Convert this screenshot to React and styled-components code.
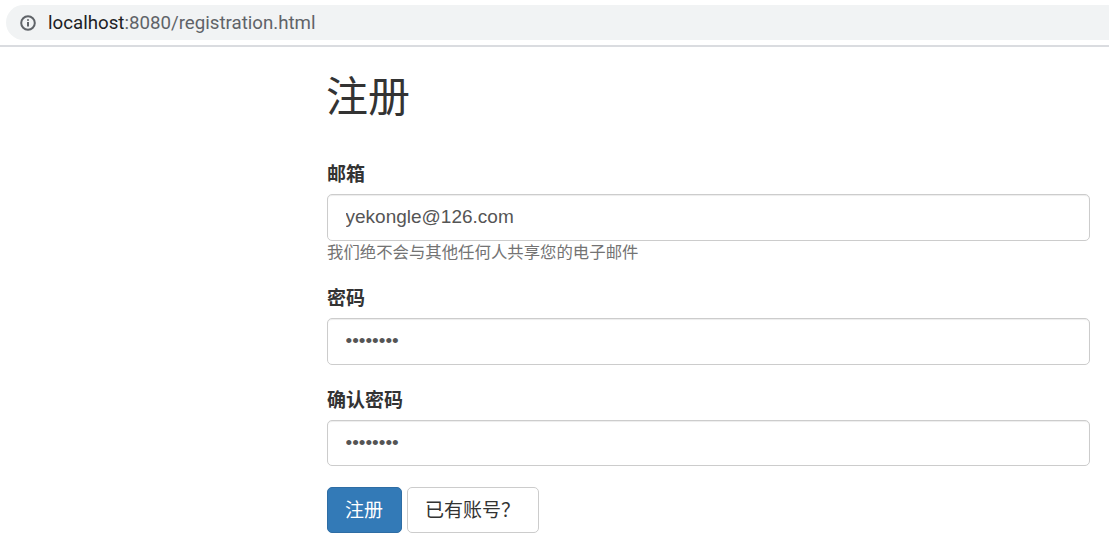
import React from "react";
import styled, { createGlobalStyle } from "styled-components";

const GlobalStyle = createGlobalStyle`
  html, body {
    margin: 0;
    padding: 0;
    background: #fff;
  }
  * {
    box-sizing: border-box;
  }
`;

const fontStack = `"Liberation Sans", "Noto Sans CJK SC", sans-serif`;

const Page = styled.div`
  width: 1109px;
  height: 546px;
  overflow: hidden;
  font-family: ${fontStack};
  color: #333;
`;

const BrowserBar = styled.div`
  height: 47px;
  padding: 5px 0 0 6px;
  border-bottom: 2px solid #dadce0;
`;

const AddressPill = styled.div`
  height: 35px;
  display: flex;
  align-items: center;
  gap: 12px;
  padding-left: 14px;
  background: #f1f3f4;
  border-radius: 18px 0 0 18px;
`;

const Url = styled.div`
  font-family: "Roboto", ${fontStack};
  font-size: 18.7px;
  color: #5f6368;
  white-space: nowrap;
  span {
    color: #202124;
  }
`;

const Main = styled.main`
  width: 763px;
  margin-left: 327px;
`;

const Title = styled.h1`
  margin: 0;
  padding-top: 25px;
  height: 109px;
  font-size: 42px;
  line-height: 52px;
  font-weight: 400;
  text-indent: -1px;
`;

const Field = styled.div`
  margin-bottom: ${(p) => p.$gap}px;
`;

const Label = styled.label`
  display: block;
  height: 38px;
  font-size: 19px;
  line-height: 37px;
  font-weight: 700;
`;

const Input = styled.input`
  display: block;
  width: 100%;
  height: ${(p) => p.$h || 47}px;
  padding: 0 18px 1px 17.5px;
  font-family: ${fontStack};
  font-size: 19px;
  color: #555;
  background: #fff;
  border: 1px solid #ccc;
  border-radius: 5px;
  box-shadow: inset 0 1px 1px rgba(0, 0, 0, 0.075);
  outline: none;
`;

const Help = styled.small`
  display: block;
  height: 23px;
  font-size: 16.4px;
  line-height: 23px;
  color: #737373;
`;

const Actions = styled.div`
  display: flex;
  gap: 5px;
`;

const Button = styled.button`
  height: 46px;
  padding: 0 18px 3px 17px;
  font-family: ${fontStack};
  font-size: 19px;
  color: ${(p) => (p.$primary ? "#fff" : "#333")};
  background: ${(p) => (p.$primary ? "#337ab7" : "#fff")};
  border: 1px solid ${(p) => (p.$primary ? "#2e6da4" : "#ccc")};
  border-radius: 5px;
`;

const InfoIcon = () => (
  <svg width="16" height="16" viewBox="0 0 16 16" fill="none" stroke="#5f6368">
    <circle cx="8" cy="8" r="6.8" strokeWidth="2" />
    <path d="M8 7v4.6M8 4.2v1.6" strokeWidth="2" />
  </svg>
);

const App = () => (
  <Page>
    <GlobalStyle />
    <BrowserBar>
      <AddressPill>
        <InfoIcon />
        <Url>
          <span>localhost</span>:8080/registration.html
        </Url>
      </AddressPill>
    </BrowserBar>
    <Main>
      <Title>注册</Title>
      <Field $gap={16}>
        <Label>邮箱</Label>
        <Input type="email" defaultValue="yekongle@126.com" />
        <Help>我们绝不会与其他任何人共享您的电子邮件</Help>
      </Field>
      <Field $gap={17}>
        <Label>密码</Label>
        <Input type="password" defaultValue="12345678" />
      </Field>
      <Field $gap={21}>
        <Label>确认密码</Label>
        <Input type="password" defaultValue="12345678" $h={46} />
      </Field>
      <Actions>
        <Button $primary>注册</Button>
        <Button>已有账号？</Button>
      </Actions>
    </Main>
  </Page>
);

export default App;
